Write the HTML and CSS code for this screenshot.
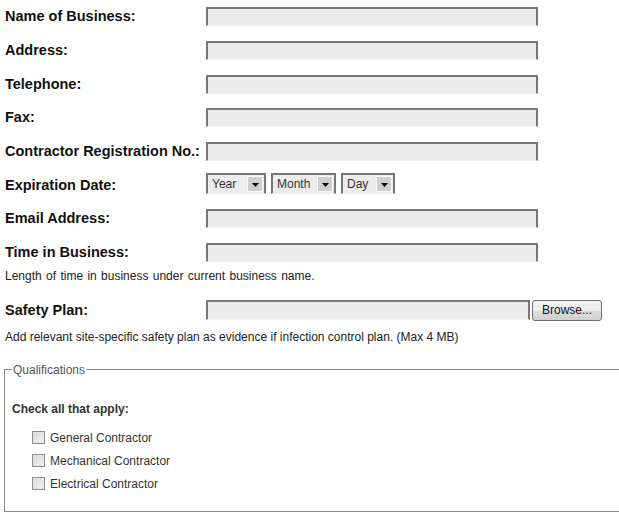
FILE: index.html
```html
<!DOCTYPE html>
<html>
<head>
<meta charset="utf-8">
<link rel="stylesheet" href="styles.css">
</head>
<body>
<form class="form">
  <div class="rows">
    <div class="row"><label class="label">Name of Business:</label><input class="text" type="text"></div>
    <div class="row"><label class="label">Address:</label><input class="text" type="text"></div>
    <div class="row"><label class="label">Telephone:</label><input class="text" type="text"></div>
    <div class="row"><label class="label">Fax:</label><input class="text" type="text"></div>
    <div class="row"><label class="label">Contractor Registration No.:</label><input class="text" type="text"></div>
    <div class="row"><label class="label">Expiration Date:</label>
      <div class="selects">
        <span class="select select-year"><span class="select-text">Year</span><span class="select-arrow"><svg width="7" height="4" viewBox="0 0 7 4"><path d="M0 0H7L3.5 4Z" fill="#000"/></svg></span></span>
        <span class="select select-month"><span class="select-text">Month</span><span class="select-arrow"><svg width="7" height="4" viewBox="0 0 7 4"><path d="M0 0H7L3.5 4Z" fill="#000"/></svg></span></span>
        <span class="select select-day"><span class="select-text">Day</span><span class="select-arrow"><svg width="7" height="4" viewBox="0 0 7 4"><path d="M0 0H7L3.5 4Z" fill="#000"/></svg></span></span>
      </div>
    </div>
    <div class="row"><label class="label">Email Address:</label><input class="text" type="text"></div>
    <div class="row"><label class="label">Time in Business:</label><input class="text" type="text"></div>
  </div>
  <p class="help help-time">Length of time in business under current business name.</p>
  <div class="row file-row"><label class="label">Safety Plan:</label><span class="file-field"></span><button type="button" class="browse">Browse...</button></div>
  <p class="help help-file">Add relevant site-specific safety plan as evidence if infection control plan. (Max 4 MB)</p>
  <fieldset class="quals">
    <legend class="legend">Qualifications</legend>
    <p class="check-title">Check all that apply:</p>
    <div class="checks">
      <label class="check"><span class="box"></span>General Contractor</label>
      <label class="check"><span class="box"></span>Mechanical Contractor</label>
      <label class="check"><span class="box"></span>Electrical Contractor</label>
    </div>
  </fieldset>
</form>
</body>
</html>
```

FILE: styles.css
```css
html, body {
  margin: 0;
  padding: 0;
  overflow: hidden;
  background: #fff;
}
body {
  font-family: "Liberation Sans", Arial, sans-serif;
  color: #111;
}
.form {
  padding: 7.3px 0 0 5px;
}
.rows {
  display: flex;
  flex-direction: column;
  gap: 14.7px;
}
.row {
  display: flex;
  align-items: center;
  height: 19px;
}
.label {
  width: 201px;
  flex: none;
  font-size: 14.5px;
  font-weight: bold;
  color: #111;
  margin-top: -1px;
}
.text, .file-field {
  display: block;
  box-sizing: border-box;
  width: 332px;
  height: 19px;
  margin: 0;
  padding: 0;
  border: 2px solid #777;
  border-bottom: 1px solid #f2f2f2;
  background: #ececec;
  outline: none;
}
.selects {
  display: flex;
  gap: 5px;
  margin-top: -3px;
}
.select {
  box-sizing: border-box;
  height: 21px;
  display: flex;
  align-items: center;
  justify-content: space-between;
  border: 2px solid #777;
  border-bottom: 1px solid #f2f2f2;
  background: #ececec;
  padding: 0 1px 0 4px;
  font-size: 12px;
  color: #333;
}
.select-year { width: 60px; }
.select-month { width: 65px; }
.select-day { width: 54px; }
.select-text {
  line-height: 14px;
}
.select-arrow {
  box-sizing: border-box;
  width: 16px;
  height: 16px;
  border: 1px solid #fafafa;
  background: #cfcfcf;
  display: flex;
  align-items: center;
  justify-content: center;
}
.select-arrow svg {
  display: block;
  margin-top: 1px;
}
.help {
  margin: 0;
  font-size: 12px;
  line-height: 14px;
  color: #222;
}
.help-time {
  margin-top: 7px;
  word-spacing: 1px;
}
.file-row {
  height: 21px;
  margin-top: 16.8px;
}
.file-field {
  width: 324px;
  height: 20px;
}
.browse {
  box-sizing: border-box;
  width: 70px;
  height: 21px;
  margin: 0 0 0 2px;
  padding: 0;
  border: 1px solid #707070;
  border-radius: 3px;
  background: linear-gradient(#f2f2f2, #ebebeb 50%, #dddddd 51%, #cfcfcf);
  font-family: "Liberation Sans", Arial, sans-serif;
  font-size: 12px;
  color: #111;
}
.help-file {
  margin-top: 9px;
}
.quals {
  margin: 19px -20px 0 -1px;
  padding: 0 7px 15.5px 7px;
  border: 1px solid #8a8a8a;
}
.legend {
  padding: 0 1px;
  font-size: 12px;
  line-height: 14px;
  color: #555;
}
.check-title {
  margin: 25px 0 0 0;
  font-size: 12px;
  line-height: 14px;
  font-weight: bold;
  color: #333;
}
.checks {
  margin-top: 10.5px;
  display: flex;
  flex-direction: column;
}
.check {
  display: flex;
  align-items: center;
  height: 23px;
  padding-left: 20px;
  font-size: 12px;
  color: #333;
}
.box {
  box-sizing: border-box;
  width: 13px;
  height: 13px;
  margin-right: 5px;
  border: 1px solid #8e8e8e;
  background: linear-gradient(135deg, #d6d6d6, #f4f4f4);
  box-shadow: inset 0 0 0 1px #e6e6e6;
}
```
